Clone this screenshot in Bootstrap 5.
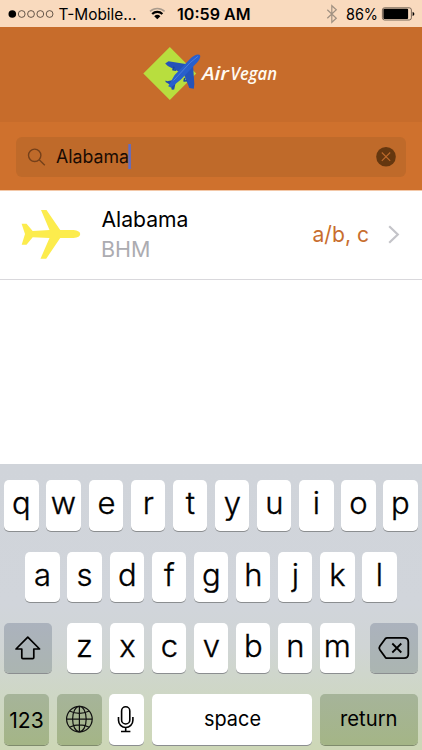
<!DOCTYPE html>
<html lang="en">
<head>
<meta charset="utf-8">
<meta name="viewport" content="width=device-width, initial-scale=1">
<title>Air Vegan</title>
<link href="https://cdn.jsdelivr.net/npm/bootstrap@5.3.0/dist/css/bootstrap.min.css" rel="stylesheet">
<style>
body{font-family:Inter,"Liberation Sans",sans-serif;color:#000;width:422px;height:750px;line-height:1.2}
svg{display:block;flex:none}
svg text{font-family:Inter,"Liberation Sans",sans-serif}
.status{height:27px;background:#f9dabe}
.brand-bar{height:95px;background:#c76c2b}
.search-bar{height:69px;background:#cf712d;padding:15px 16px 13px;border-bottom:1px solid #f3c8a8}
.search-field{height:40px;border-radius:6px;background:#bf6a2a}
.result{height:89px;border-bottom:1px solid #d9d8dc}
.keyboard{height:285.6px;padding:15.9px 4.2px 0;background:linear-gradient(#d0d4da 0,#d1d5db 49%,#d0d5d5 64%,#ced7c4 82%,#cdd7b6 100%)}
.key-row{height:50.5px;gap:7.85px;margin-bottom:20.8px}
.key{width:34.3px;height:50.5px;border-radius:5px;background:#fff;box-shadow:0 1px 0 #8b8e90}
.key-letter{stroke:#000;stroke-width:.35px}
.key-side{width:47.5px;background:linear-gradient(#abb2bd,#abb5b1)}
.key-green{background:linear-gradient(#a6b49a,#a4b586);box-shadow:0 1px 0 #7f8b6c}
.key-mode{width:44.8px}
.key-space{width:160.8px}
.key-return{width:97.4px}
svg .wordmark{font-family:"Open Sans","Liberation Sans",sans-serif;font-style:italic;font-weight:600}
</style>
<script src="https://cdn.jsdelivr.net/npm/bootstrap@5.3.0/dist/js/bootstrap.bundle.min.js"></script>
</head>
<body class="d-flex flex-column overflow-hidden bg-white m-0">
<header>
  <div class="status">
    <svg width="422" height="27" viewBox="0 0 422 27">
      <circle cx="12.3" cy="14" r="3.8"/>
      <g fill="none" stroke="#40352c" stroke-width=".8"><circle cx="21.7" cy="14" r="3.4"/><circle cx="31" cy="14" r="3.4"/><circle cx="40.3" cy="14" r="3.4"/><circle cx="49.6" cy="14" r="3.4"/></g>
      <text x="58.5" y="19.5" font-size="15.3" textLength="78" lengthAdjust="spacingAndGlyphs">T-Mobile…</text>
      <g fill="none" stroke-width="2.2"><path d="M150 11.4a10.6 10.6 0 0 1 14.6 0" stroke="#ab9c8d" stroke-width="1.6"/><path d="M152.2 14a7.2 7.2 0 0 1 10.2 0" stroke="#000"/></g>
      <path d="M154.2 16.2a4.5 4.5 0 0 1 6.2 0l-3.1 3.1z"/>
      <text x="177" y="19.5" font-size="15.5" font-weight="600" textLength="73.5" lengthAdjust="spacingAndGlyphs">10:59 AM</text>
      <path d="M327.3 9.7l9 8.5-4.5 4.1V5.7l4.5 4.1-9 8.5" fill="none" stroke="#a09182" stroke-width="1.2"/>
      <text x="346" y="19.5" font-size="15.3" textLength="32" lengthAdjust="spacingAndGlyphs">86%</text>
      <rect x="382.4" y="7.8" width="29" height="12.2" rx="2.2" fill="none" stroke="#594b40" stroke-width=".8"/><rect x="383.4" y="8.8" width="24.7" height="10.2" rx="1"/><path d="M412.6 11.7q1.8.8 1.8 2.2t-1.8 2.2z"/>
    </svg>
  </div>
  <div class="brand-bar d-flex justify-content-center">
    <svg width="150" height="95" viewBox="136 27 150 95" role="img" aria-label="Air Vegan">
      <path d="M169.8 47L196.2 73.5L169.8 100L143.3 73.5Z" fill="#b8de3e"/>
      <path d="M188.5 64.5L168.5 61.2L165.2 63.4L167.8 66L178.5 71.5L182 72ZM193 64L184 74.5L189.3 88L193.8 88.7L194.3 84Z" fill="#2453b9"/>
      <path d="M173.6 80L167.2 81.2L165.6 80.6L165.5 82L170.6 85L171.8 89.7L174.2 89.5L175.8 82Z" fill="#1f4aae"/>
      <path d="M199.8 55C201.3 56.8 198.9 61 195.9 63.8L181 79.4L171 87.4L168.2 86.2L174.5 75.2L189.7 59.2C193.2 55.6 198.1 53.4 199.8 55Z" fill="#285fcc"/>
      <path d="M197.9 56.4L190 62.8L173.6 80.5" fill="none" stroke="#4d7edd" stroke-width="1"/>
      <path d="M174.2 66.6l-1.2 3.2 3 .5M184.8 78l-.7 3 3-.2" fill="none" stroke="#1949a2" stroke-width="1.6" stroke-linejoin="round"/>
      <text class="wordmark" x="202" y="79.7" fill="#fffaf1" font-size="18.5" textLength="27" lengthAdjust="spacingAndGlyphs">Air</text>
      <text class="wordmark" x="230.5" y="79.7" fill="#fffaf1" font-size="18.5" textLength="46.5" lengthAdjust="spacingAndGlyphs">Vegan</text>
    </svg>
  </div>
  <div class="search-bar">
    <div class="search-field">
      <svg width="390" height="40" viewBox="16 137 390 40">
        <g fill="none" stroke="#75401a" stroke-width="1.4"><circle cx="34.7" cy="155.3" r="6.2"/><path d="M39.2 159.8l5.6 5.5"/></g>
        <text x="56" y="163.3" font-size="18.3" fill="#180b03" textLength="73" lengthAdjust="spacingAndGlyphs">Alabama</text>
        <path d="M129.6 144v25" stroke="#626dc2" stroke-width="2.6"/>
        <circle cx="386" cy="156.7" r="9.8" fill="#65370f"/><path d="M381.8 152.5l8.4 8.4m0-8.4l-8.4 8.4" stroke="#bd6a2b" stroke-width="1.1"/>
      </svg>
    </div>
  </div>
</header>
<main class="flex-grow-1">
  <div class="result">
    <svg width="422" height="88" viewBox="0 191 422 88">
      <path d="M41 210H46.5L60.2 230H73.5Q80.2 230.8 80.2 234Q80.2 237.5 73.5 238H60.2L46.2 258.7H40.5L49.5 238L32.7 237.2L26.5 244.8H21.7L25 234L21.6 223.7H26.5L32.7 231L49.5 230Z" fill="#fcec4d"/>
      <text x="101.5" y="226.7" font-size="22" textLength="87" lengthAdjust="spacingAndGlyphs">Alabama</text>
      <text x="101" y="257" font-size="22" fill="#acacb1" textLength="49.5" lengthAdjust="spacingAndGlyphs">BHM</text>
      <text x="312.5" y="242.3" font-size="22" fill="#c86e2e" textLength="56.5" lengthAdjust="spacingAndGlyphs">a/b, c</text>
      <path d="M389.2 226.3l8.6 8.2-8.6 8.2" fill="none" stroke="#c4c4c9" stroke-width="2.2"/>
    </svg>
  </div>
</main>
<section class="keyboard" aria-label="Keyboard">
  <div class="key-row d-flex justify-content-center" data-keys="qwertyuiop"></div>
  <div class="key-row d-flex justify-content-center" data-keys="asdfghjkl"></div>
  <div class="d-flex justify-content-between">
    <div class="key key-side"><svg width="47.5" height="50.5" viewBox="4.2 623 47.5 50.5"><path d="M28 637.2L39.8 649H34V657.5Q34 658.6 32.9 658.6H23.1Q22 658.6 22 657.5V649H16.2Z" fill="none" stroke="#000" stroke-width="1.7" stroke-linejoin="round"/></svg></div>
    <div class="key-row d-flex" data-keys="zxcvbnm"></div>
    <div class="key key-side"><svg width="47.5" height="50.5" viewBox="370.2 623 47.5 50.5"><g fill="none" stroke="#000" stroke-width="1.8" stroke-linejoin="round"><path d="M387.5 637.8H404.2Q408.5 637.8 408.5 642V654Q408.5 658.2 404.2 658.2H387.5Q386.3 658.2 385.5 657.3L380 649.7Q378.8 648 380 646.3L385.5 638.7Q386.3 637.8 387.5 637.8Z"/><path d="M392.5 643.5l9 9m0-9l-9 9"/></g></svg></div>
  </div>
  <div class="key-row d-flex">
    <div class="key key-green key-mode"><svg width="44.8" height="50.5"><text x="5.2" y="33.6" font-size="21" textLength="34.5" lengthAdjust="spacingAndGlyphs">123</text></svg></div>
    <div class="key key-green key-mode"><svg width="44.8" height="50.5" viewBox="57 694.3 44.8 50.5"><g fill="none" stroke="#111" stroke-width="1.2"><circle cx="79.4" cy="719.4" r="12.8"/><ellipse cx="79.4" cy="719.4" rx="6.8" ry="12.8"/><path d="M79.4 706.6v25.6M66.6 719.4h25.6M69.5 711.3q9.9 4.7 19.8 0M69.5 727.5q9.9-4.7 19.8 0"/></g></svg></div>
    <div class="key"><svg width="34.3" height="50.5" viewBox="109.4 694.3 34.3 50.5"><g fill="none" stroke="#000" stroke-width="1.6"><rect x="122" y="707.1" width="8.2" height="17.2" rx="4.1"/><path d="M118.9 717.3v3.3a7.2 7.2 0 0 0 14.4 0v-3.3M126.1 727.8v4.2M121.4 731.8h9.4"/></g></svg></div>
    <div class="key key-space"><svg width="160.8" height="50.5"><text x="52" y="31.9" font-size="20.5" textLength="57" lengthAdjust="spacingAndGlyphs">space</text></svg></div>
    <div class="key key-green key-return"><svg width="97.4" height="50.5"><text x="20" y="31.9" font-size="20.5" textLength="57.5" lengthAdjust="spacingAndGlyphs">return</text></svg></div>
  </div>
</section>
<script>
document.querySelectorAll('[data-keys]').forEach(function(row){
  row.innerHTML = row.dataset.keys.split('').map(function(c){
    return '<div class="key"><svg width="34.3" height="50.5"><text class="key-letter" x="17.4" y="33.8" font-size="31" font-weight="300" text-anchor="middle">' + c + '</text></svg></div>';
  }).join('');
});
</script>
</body>
</html>
